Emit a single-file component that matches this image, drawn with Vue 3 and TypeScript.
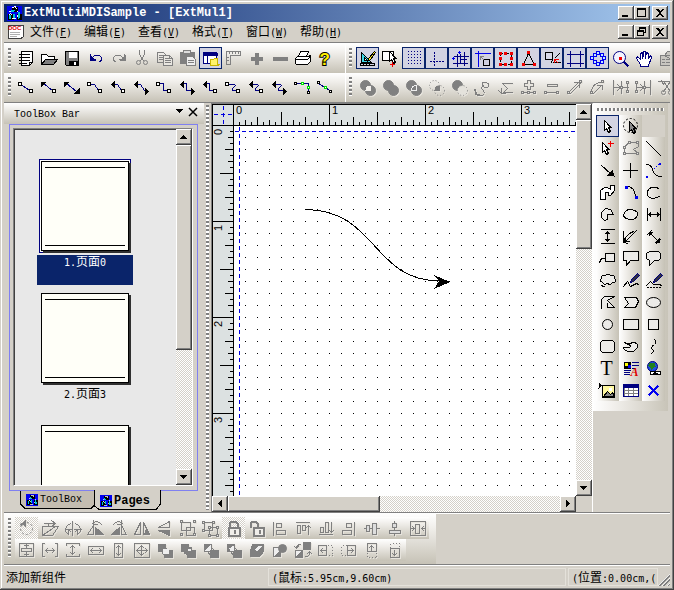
<script setup lang="ts">
import { computed, onBeforeUnmount, onMounted, ref } from 'vue'

interface Tool {
  name: string
  art: string
  on?: boolean
  dither?: boolean
}

const NAVY = '#000080'
const GRAY = '#808080'
const RED = '#f00000'
const BLUE = '#0000f0'

// Icon art is drawn on a 23 x 22 grid where whole numbers are pixel centres.
const p = (d: string, stroke = '#000', fill = 'none', extra = '') =>
  `<path d="${d}" stroke="${stroke}" fill="${fill}" ${extra}/>`
const f = (d: string, fill = '#000') => p(d, 'none', fill)
const g = (d: string, fill = 'none', extra = '') => p(d, GRAY, fill, extra)
const box = (x: number, y: number, s = 3, stroke = '#000', fill = '#fff') =>
  p(`M${x} ${y}h${s}v${s}h${-s}z`, stroke, fill)
const oval = (x: number, y: number, rx: number, ry: number, stroke = '#000', fill = 'none', extra = '') =>
  `<ellipse cx="${x}" cy="${y}" rx="${rx}" ry="${ry}" stroke="${stroke}" fill="${fill}" ${extra}/>`
const cursor = (x: number, y: number, fill = '#fff') =>
  p(`M${x} ${y}v10l2 -2l2 4l2 -1l-2 -4h3z`, '#000', fill) + p(`M${x + 3} ${y + 4}l3 3M${x + 4} ${y + 7}l2 4`)
const dash = 'stroke-dasharray="1 2" stroke-linecap="butt"'

const tool = (name: string, art: string, on = false, dither = false): Tool => ({ name, art, on, dither })

const logo =
  f('M0 0h16v16h-16z', BLUE) +
  f('M5 1h6v5h-6zM1 8h6v6h-6zM10 8h5v6h-5z', '#000') +
  p('M6 2l3 -1l1 3M3 6l4 -1M11 6l2 3M2 10l2 -2l2 2M10 12l2 -3l2 3M5 13h4', '#fff') +
  p('M5 5l3 1M3 9v4M7 8v4M12 7l1 6', '#00c0d8', 'none', 'stroke-width="2"')

const standard: Tool[] = [
  tool('New', p('M6 4h11v11l-3 3h-8z', '#000', '#fff') + p('M4 7h10M4 10h10M4 13h10M4 16h7M14 18v-3h3')),
  tool('Open', p('M3 16v-9h5l2 2h6v3', '#000', '#fff') + p('M3 17l4 -5h12l-4 5z', '#000', GRAY)),
  tool('Save', p('M4 4h13v14h-12l-1 -1z', '#000', GRAY) + f('M7 4h8v6h-8z', '#fff') + f('M7 13h9v5h-9z') + f('M12 14h2v3h-2z', '#fff')),
  tool('Undo', p('M6 7v5h5M7 11l3 -3h5l2 2v3l-2 1', NAVY) + f('M5 7v6h6z', NAVY)),
  tool('Redo', g('M17 7v5h-5M16 11l-3 -3h-5l-2 2v3l2 1') + f('M18 7v6h-6z', GRAY)),
  tool('Cut', g('M9 3v4l4 6M14 3v4l-4 6M9 4v3M14 4v3') + oval(8, 15, 2, 2, GRAY) + oval(15, 15, 2, 2, GRAY)),
  tool('Copy', g('M4 5h6l3 3v7h-9zM6 8h4M6 10h4M6 12h3') + g('M10 8h6l3 3v7h-9z', '#e8e6e0') + g('M12 11h3M12 13h5M12 15h5M16 8v3h3')),
  tool('Paste', g('M4 5h14v11h-14z', GRAY) + g('M7 3h7v3h-7z', '#ddd') + g('M10 9h6l3 3v6h-9z', '#eee') + g('M12 13h5M12 15h5')),
  tool('Panels', p('M4 5h13v11h-13z', NAVY, '#fff') + f('M4 5h14v3h-14z', NAVY) + p('M8 8v8', NAVY) + p('M11 17v-5h3l1 -1h3v6h2l-2 1h-7z', '#c8b400', '#fff36a'), true),
  tool('Rulers', g('M4 4h14v4h-10v9h-4zM7 4v2M10 4v2M13 4v2M16 4v2M4 10h2M4 13h2')),
  tool('Add', f('M9 5h4v4h4v4h-4v4h-4v-4h-4v-4h4z', GRAY)),
  tool('Remove', f('M4 9h15v4h-15z', GRAY)),
  tool('Print', p('M7 9l2 -5h8l-2 5', '#000', '#fff') + p('M4 11l2 -2h11l2 -1v6l-3 3h-11l-1 -1z', '#000', '#fff') + p('M4 12h12M16 12l3 -3')),
  tool('Help', '<text x="5" y="17" font-family="Liberation Sans" font-weight="bold" font-size="17" fill="#fff000" stroke="#000" stroke-width="2" paint-order="stroke">?</text>'),
]

const n = (x: number, y: number) => box(x, y, 2, RED, RED)
const ringBox = (x: number, y: number) => box(x, y, 3, BLUE, '#bfe8ff')
const view: Tool[] = [
  tool('Design mode', p('M5 5v10h10z', '#000', '#40d8e8') + p('M8 10v3h3z', '#000', '#fff') + p('M4 16h14v2h-14zM7 16v1M10 16v1M13 16v1') + p('M18 4l-6 7l-1 3l3 -2l5 -7z', '#000', '#ffe820'), true),
  tool('Copy selection', p('M3 4h11v9h-11z', '#000', '#fff') + cursor(10, 4) + p('M13 15v4M11 17h4', RED)),
  tool('Grid', [4, 7, 10, 13, 16].map((y) => p(`M5 ${y}h14`, NAVY, 'none', 'stroke-width="2" stroke-dasharray="2 1" stroke-linecap="butt"')).join('').replace(/stroke-width="2" stroke-dasharray="2 1"/g, 'stroke-dasharray="1 2"'), true),
  tool('Guides', p('M9 4v14M4 14h15', NAVY, 'none', 'stroke-dasharray="2 1" stroke-linecap="butt"'), true),
  tool('Snap to guides', p('M9 7v12M16 5v13M6 9h14M5 16h14M12 7v8M12 12h6', NAVY) + p('M11 4v2M10 5h2M5 10v2M4 11h2', BLUE), true),
  tool('Snap to grid', p('M4 6h15M7 4v15', BLUE) + box(12, 12, 6, '#000', '#d0d0e0') + g('M9 9h3M9 9v3M9 9l3 3'), true),
  tool('Resize handles', p('M6 6h11v11h-11z', '#000', 'none', 'stroke-dasharray="2 1"') + n(5, 5) + n(10, 5) + n(16, 5) + n(5, 10) + n(16, 10) + n(5, 16) + n(10, 16) + n(16, 16), true),
  tool('Vertices', p('M11 6l-5 11h11z') + n(10, 4) + n(5, 16) + n(16, 16), true),
  tool('Glue', box(5, 5, 7, '#000', '#d8d8e8') + p('M13 15h7M19 6l-4 4M12 12l-1 3') + p('M14 12v3M14 12h4M14 12l3 3', RED), true),
  tool('Page bounds', p('M7 4v15M17 4v15M4 7h16M4 16h16', NAVY), true),
  tool('Ports', ringBox(10, 4) + ringBox(10, 15) + ringBox(4, 9) + ringBox(16, 9) + ringBox(7, 6) + ringBox(14, 6) + ringBox(7, 13) + ringBox(14, 13), true),
  tool('Zoom', oval(10, 10, 6, 6, NAVY, '#f4f4ff') + p('M15 15l3 3', NAVY, 'none', 'stroke-width="2"') + f('M9 9h3v3h-3z', RED)),
  tool('Pan', p('M8 17l-4 -6l1 -2l3 3v-6l2 -1l1 4v-5h2v5l1 -4l2 1v5l2 -3l1 2l-3 8v1h-8z', NAVY, '#fff') + p('M10 8v3M13 8v3M16 9v2', NAVY)),
  tool('Properties', g('M5 8h13v10h-13zM9 8l3 -4h7v5l-3 3z', '#c8c6c0') + g('M7 12h2M11 12h5M7 15h2M11 15h5')),
]

const a1 = box(3, 6)
const a2 = box(14, 13)
const tl = f('M2 5h6l-6 6z')
const lf = f('M3 8l4 -4v8z')
const rt = f('M18 15l-4 -4v8z')
const straight = p('M7 9l7 5', NAVY)
const slant = p('M6 8h4l4 6h2', NAVY)
const ortho = p('M6 7h4v7h5', NAVY)
const curvy = p('M6 8h6l1 1l-3 3v2h5', NAVY)
const gn = (x: number, y: number) => box(x, y, 2, '#00e000')
const connectors: Tool[] = [
  tool('Line', straight + a1 + a2),
  tool('Line, arrow at start', p('M5 7l9 7', NAVY) + tl + a2),
  tool('Line, two arrows', p('M5 7l10 8', NAVY) + tl + f('M18 17v-6l-6 6z')),
  tool('Slanted link', slant + a1 + a2),
  tool('Slanted link, arrow at start', slant + lf + a2),
  tool('Slanted link, two arrows', slant + lf + rt),
  tool('Right angle link', ortho + a1 + a2),
  tool('Right angle link, two arrows', ortho + lf + rt),
  tool('Right angle link, arrow at start', ortho + lf + a2),
  tool('Curved link', curvy + a1 + a2),
  tool('Curved link, arrow at start', curvy + lf + a2),
  tool('Curved link, two arrows', curvy + lf + rt),
  tool('Routed link', p('M4 7h13v8', NAVY) + box(3, 6, 2) + gn(10, 6) + gn(16, 10) + box(16, 15, 2)),
  tool('Free link', p('M4 7l13 8', NAVY) + box(3, 5, 2) + gn(10, 10) + box(15, 14, 2)),
]

const c1 = (fill: string, x = '') => oval(9, 9, 5, 5, GRAY, fill, x)
const c2 = (fill: string, x = '') => oval(14, 14, 5, 5, GRAY, fill, x)
const lens = f('M9 14q0 -5 5 -5q1 5 0 5q-2 1 -5 0', '#f2f0ec')
const gb = (x: number, y: number, s = 2) => box(x, y, s, GRAY, '#e8e6e0')
const shapes: Tool[] = [
  tool('Exclude', c1(GRAY) + c2(GRAY) + lens),
  tool('Union', c1(GRAY) + c2(GRAY) + f('M8 13l5 -5l4 4l-4 4z', GRAY)),
  tool('Divide', c1(GRAY) + c2(GRAY) + p('M9 14q0 -5 5 -5q1 5 0 5q-3 1 -5 0', '#eee', GRAY)),
  tool('Intersect', c1('none', dash) + c2('none', dash) + f('M9 14q0 -5 5 -5q1 5 0 5z', GRAY)),
  tool('Subtract', c1(GRAY) + c2('#e4e2dc', dash)),
  tool('Reverse curve', g('M13 6q5 0 4 4q-3 3 -5 0q-3 -5 1 -4M12 10q-4 1 0 4q2 4 -2 5h-4M4 13v5h4M5 17l-2 -4')),
  tool('Reverse polygon', g('M18 7h-10l5 5l-4 4h9M7 12v5l-3 -3M7 17h4')),
  tool('Add point', g('M10 4h3v3h3v3h-3v3h-3v-3h-3v-3h3zM5 16h13') + gb(4, 15) + gb(10, 15) + gb(16, 15)),
  tool('Delete point', g('M7 8h10v2h-10zM5 16h13') + gb(4, 15) + gb(16, 15)),
  tool('Straighten', g('M5 16l10 -10M7 17l10 -10M11 6h5v5') + gb(4, 15) + gb(16, 4)),
  tool('Round', g('M5 16q0 -9 9 -10M7 17l8 -8M11 9h5v4') + gb(4, 15) + gb(15, 4)),
  tool('Break', g('M4 4v14M4 11h6M8 8l3 3l-3 3M12 5v12M12 11h7M18 6v10') + gb(11, 10) + gb(17, 5) + gb(17, 14)),
  tool('Join', g('M4 6v10M4 11h6M8 8l3 3l-3 3M12 5v12M12 11h5M18 4v14') + gb(3, 5) + gb(3, 14) + gb(11, 10)),
  tool('Trim', g('M3 5h17M8 5l7 10M15 5l-7 10M6 4l2 4M17 4l-2 4') + oval(8, 16, 2, 2, GRAY) + oval(15, 16, 2, 2, GRAY)),
]

const flipTri = g('M10 5v12h-6z') + g('M13 5v12h6z')
const backward = (x1: string, x2: string) => g('M5 5h7v7h-7z', x1) + g('M11 11h8v7h-8z', x2) + g('M8 12l4 5M12 8l4 4')
const arrange1: Tool[] = [
  tool('Rotate', oval(11, 11, 6, 6, GRAY, 'none', 'stroke-dasharray="2 2"') + f('M10 2v7l-4 -3z', GRAY) + oval(6, 7, 1, 1, GRAY, GRAY), false, true),
  tool('Shear', g('M4 9h16l-6 9h-10zM4 18l13 -9M6 6h10M13 3l4 3l-4 3M10 6v3')),
  tool('Free rotate', g('M11 4v14M9 6q-6 3 -5 8l3 3v-5l2 2M14 6q6 3 5 8l-3 3v-5l-2 2M4 12h6M13 12h7')),
  tool('Rotate left', g('M11 10v7h8z', GRAY) + g('M9 8l-6 9h6zM8 6q5 -4 9 1M9 3v4h4')),
  tool('Rotate right', g('M12 10v7h-8z', GRAY) + g('M14 8l5 9h-5zM15 6q-5 -4 -9 1M14 3v4h-4')),
  tool('Flip horizontal', flipTri + g('M16 11l2 6h-4z', GRAY)),
  tool('Flip vertical', g('M5 10l11 -6v6z') + g('M5 13l11 5v-5z', GRAY)),
  tool('Group', g('M5 5h9v8h-9zM10 10h8v8h-8z') + gb(4, 3) + gb(17, 3) + gb(4, 16) + gb(17, 16)),
  tool('Ungroup', g('M5 5h8v8h-8zM10 10h8v8h-8z') + gb(3, 4) + gb(13, 4) + gb(3, 12) + gb(9, 9) + gb(17, 9) + gb(9, 17) + gb(17, 17)),
  tool('Lock', g('M7 10v-4l2 -2h4l2 2v4', 'none', 'stroke-width="2"') + g('M6 10h11v8h-11z', '#f0eeea', 'stroke-width="2"') + f('M11 12h2v4h-2z', GRAY), false, true),
  tool('Unlock', g('M5 9v-3l2 -2h3l2 2v4', 'none', 'stroke-width="2"') + g('M8 10h10v8h-10z', '#f0eeea', 'stroke-width="2"') + f('M13 12h2v4h-2z', GRAY)),
  tool('Align left', g('M5 5v13M8 6h5v4h-5zM8 13h9v4h-9z')),
  tool('Align top', g('M5 5h13M6 8h3v8h-3zM11 8h3v5h-3zM17 8v9M15 10l2 -2l2 2')),
  tool('Align bottom', g('M5 17h13M6 10h3v5h-3zM11 5h3v10h-3zM17 5v10M15 13l2 2l2 -2')),
  tool('Align right', g('M17 5v13M9 6h5v4h-5zM5 13h9v4h-9z')),
  tool('Align middle', g('M4 11h15') + g('M6 8h3v6h-3zM12 6h4v11h-4z', '#ddd')),
  tool('Align centre', g('M11 4v14') + g('M9 6h4v4h-4zM6 13h11v3h-11z', '#ddd')),
  tool('Centre in page', g('M4 4h15v14h-15zM9 7h4v9h-4zM5 11h3M15 11h4M6 9l2 2l-2 2M17 9l-2 2l2 2')),
]
const arrange2: Tool[] = [
  tool('Centre vertically', g('M4 4h14v13h-14zM6 9h10v3h-10zM11 5v3M11 13v3M9 6h4M9 15h4')),
  tool('Space across', g('M4 4v13M19 4v13M4 4h2M4 17h2M17 4h2M17 17h2M7 11h9M9 9l-2 2l2 2M14 9l2 2l-2 2')),
  tool('Space down', g('M5 4h13M5 17h13M5 4v2M18 4v2M5 17v-2M18 17v-2M11 6v9M9 8l2 -2l2 2M9 13l2 2l2 -2')),
  tool('Same width', g('M4 7h15v8h-15zM6 11h11M8 9l-2 2l2 2M15 9l2 2l-2 2')),
  tool('Same height', g('M7 4h8v14h-8zM11 6v10M9 8l2 -2l2 2M9 14l2 2l2 -2')),
  tool('Same size', g('M4 4h15v14h-15zM6 11h11M11 6v10M9 8l2 -2l2 2M9 14l2 2l2 -2M8 9l-2 2l2 2M15 9l2 2l-2 2')),
  tool('To front', backward(GRAY, GRAY) + f('M9 9h6v5h-6z', '#eee')),
  tool('To back', backward(GRAY, GRAY) + g('M8 8h7v6h-7z', GRAY) + f('M11 9h3v2h-3z', '#eee')),
  tool('Forward', backward('#eee', GRAY) + f('M5 5h6l-6 6z', GRAY)),
  tool('Backward', backward(GRAY, GRAY) + f('M7 9l4 -3v5h-4z', '#eee')),
  tool('In front of', g('M7 5h11v7l-4 5h-9v-6z', GRAY) + f('M9 10l4 -4h4l-6 6z', '#eee')),
  tool('Behind', g('M5 8h7v9h-7z', '#eee') + g('M6 17l6 -6v6z', GRAY) + oval(14, 9, 4, 4, GRAY, GRAY)),
  tool('Swap order', g('M12 3h7v7h-7z', GRAY) + g('M4 11h7v7h-7z', '#eee') + g('M4 18l7 -7v7z', GRAY) + g('M9 5q-4 0 -4 4M3 7l2 2l2 -2M14 17q4 0 4 -4M16 14l2 -2l2 2')),
  tool('Nudge left', g('M4 6h8v10h-8zM6 11h5M8 9l-2 2l2 2') + g('M13 6h5v10h-5', 'none', dash)),
  tool('Nudge right', g('M10 6h8v10h-8zM11 11h5M14 9l2 2l-2 2') + g('M9 6h-5v10h5', 'none', dash)),
  tool('Nudge up', g('M7 4h9v8h-9zM11 6v5M9 8l2 -2l2 2') + g('M7 13v5h9v-5', 'none', dash)),
  tool('Nudge down', g('M7 9h9v9h-9zM11 11v5M9 14l2 2l2 -2') + g('M7 8v-4h9v4', 'none', dash)),
]

const soft = '#ecebe8'
const pen = p('M18 4l-6 6l-1 3l3 -1l6 -6z', NAVY, '#303040')
const palette: (Tool | null)[] = [
  tool('Select', cursor(8, 5), true),
  tool('Lasso', oval(11, 10, 7, 7, '#000', 'none', 'stroke-dasharray="2 2"') + cursor(10, 6, '#888')),
  null,
  tool('Add vertex', cursor(6, 5) + p('M14 4v5M12 6h5', RED)),
  tool('Edit vertices', g('M5 16v-7l5 -4h9v4l-5 3l5 4z') + gb(4, 15) + gb(9, 4) + gb(17, 4) + gb(17, 15) + gb(4, 9)),
  tool('Line', p('M4 4l14 14')),
  tool('Arrow line', p('M5 6l9 8') + f('M18 17l-2 -7l-6 6z')),
  tool('Cross', p('M11 4v14M4 11h14')),
  tool('Bezier', p('M4 5q5 0 6 5q2 7 9 7') + p('M5 16l11 -11', BLUE, 'none', dash) + f('M16 3h2v2h-2zM3 16h2v2h-2z', BLUE)),
  tool('Polyline', p('M4 9v9h5v-7h3v3h2l4 -5v-5h-4v4l-3 -2h-3z', '#000', '#fff')),
  tool('Arc', p('M7 5q9 0 9 12', '#000') + f('M5 4h3v3h-3zM15 14h3v3h-3z', BLUE)),
  tool('Open ellipse', p('M16 7q-4 -3 -9 0q-5 5 0 9q5 2 10 -1')),
  tool('Pie', p('M11 11v5l-3 1l-3 -3v-5l4 -4l5 1l3 5h-6', '#000', soft)),
  tool('Closed curve', p('M4 11q3 -6 8 -5q8 2 6 6q-3 5 -8 4q-6 -1 -6 -5', '#000', soft)),
  tool('Horizontal dimension', p('M5 5v12M18 5v12M6 11h11M8 9v4M15 9v4M7 10v2M16 10v2')),
  tool('Vertical dimension', p('M5 4h13M5 18h13M11 6v10M9 8h4M9 14h4M10 7h2M10 15h2')),
  tool('Radius', p('M4 6v8q0 3 4 4M6 16l11 -11M4 17q2 -8 10 -11M6 12v4h4')),
  tool('Aligned dimension', p('M5 9l4 -4M14 18l4 -4M7 7l9 9') + f('M6 6h5l-5 5zM17 17h-5l5 -5z')),
  tool('Connector label', p('M9 6h9v8h-9z', '#000', soft) + p('M9 11h-4l-2 4')),
  tool('Rectangular callout', p('M4 4h15v9h-8l-4 5v-5h-3z', '#000', soft)),
  tool('Rounded callout', p('M7 4h9l2 2v5l-2 2h-4l-5 5v-5l-3 -2v-5z', '#000', soft)),
  tool('Cloud', p('M6 13q-4 -2 -1 -4q-1 -4 4 -3q3 -3 5 0q5 -1 4 3q3 4 -2 4q-2 3 -5 1q-4 2 -5 -1M5 16h1M6 17h2', '#000', soft)),
  tool('Freehand', p('M4 17l4 -5l3 5l6 -3l2 1') + pen),
  tool('Closed freehand', p('M4 16l4 -4l3 3h6l2 1') + p('M4 18h15', '#000', 'none', 'stroke-dasharray="2 1"') + pen),
  tool('Polygon', p('M5 17v-9l3 -3h10l-7 4l7 7h-7v-4', '#000', soft)),
  tool('Closed shape', p('M5 6h12l2 4l-3 6h-11l4 -4z', '#000', soft)),
  tool('Ellipse', oval(11, 11, 7, 5, '#000', soft)),
  tool('Circle', oval(11, 11, 5, 5, '#000', soft)),
  tool('Rectangle', p('M4 6h15v10h-15z', '#000', soft)),
  tool('Square', p('M6 6h10v10h-10z', '#000', soft)),
  tool('Rounded rectangle', p('M6 5h10l2 2v8l-2 2h-10l-2 -2v-8z', '#000', soft)),
  tool('Teardrop', p('M5 7q4 3 8 0q6 0 5 5q-5 7 -12 3q-4 -4 0 -3q5 1 5 -2z', '#000', soft)),
  tool('Curve', p('M12 4q3 2 0 5q-5 3 -1 6q0 2 -2 3')),
  tool('Text', '<text x="4" y="17" font-family="Liberation Serif" font-size="20" fill="#000">T</text>'),
  tool('Rich text', f('M4 4h7v7h-7z', '#000') + f('M5 5h3v3h-3z', '#ff0') + f('M8 7h3v3h-3z', BLUE) + p('M13 5h6M13 8h6M13 11h3M5 13h6M5 15h5M5 17h5', NAVY) + '<text x="11" y="18" font-family="Liberation Serif" font-weight="bold" font-style="italic" font-size="12" fill="#e00000">A</text>'),
  tool('Web link', oval(10, 9, 5, 5, NAVY, '#2050e0') + f('M7 5h5l1 4l-4 3l-3 -4z', '#208020') + p('M8 14h4v3h-4zM13 14h5v3h-5zM11 16h4', '#000', '#fff')),
  tool('Image', p('M6 6h12v12h-12z', '#000', '#fff8a0') + p('M7 17l4 -5l3 3l2 -2l2 4z', '#000', '#888') + f('M12 8h3v3h-3z', '#fff') + f('M2 3l4 3l-4 3z')),
  tool('Table', g('M5 6h14v11h-14zM9 9v7M14 9v7M5 11h13M5 14h13', '#fff') + p('M4 5h15v12h-15z', NAVY) + f('M4 5h15v3h-15z', NAVY)),
  tool('Delete', p('M7 7l8 8M15 7l-8 8', BLUE, 'none', 'stroke-width="2"')),
]

const menus = [
  ['文件', 'F'],
  ['编辑', 'E'],
  ['查看', 'V'],
  ['格式', 'T'],
  ['窗口', 'W'],
  ['帮助', 'H'],
]

const pages = [
  { no: '1.', title: '页面', id: '0', selected: true },
  { no: '2.', title: '页面', id: '3', selected: false },
  { no: '', title: '', id: '', selected: false },
]

const origin = 21
const unit = 96
const ticks = Array.from({ length: 320 }, (_, i) => {
  const k = i + 1
  const size = k % 16 === 0 ? 20 : k % 8 === 0 ? 13 : k % 4 === 0 ? 8 : k % 2 === 0 ? 5 : 3
  return { at: origin + k * 6, size }
})
const hTicks = ticks.map((t) => `M${t.at} ${origin}v${-t.size}`).join('')
const vTicks = ticks.map((t) => `M${origin} ${t.at}h${-t.size}`).join('')

// Ruler numbers are only placed where they fit whole.
const paper = ref<HTMLElement | null>(null)
const size = ref({ w: 364, h: 392 })
const marksUpTo = (length: number) => {
  const count = Math.max(0, Math.floor((length - origin - 16) / unit) + 1)
  return Array.from({ length: count }, (_, i) => ({ label: i, at: origin + i * unit }))
}
const hMarks = computed(() => marksUpTo(size.value.w))
const vMarks = computed(() => marksUpTo(size.value.h))
let observer: ResizeObserver | undefined
onMounted(() => {
  observer = new ResizeObserver(([entry]) => {
    size.value = { w: entry.contentRect.width, h: entry.contentRect.height }
  })
  if (paper.value) observer.observe(paper.value)
})
onBeforeUnmount(() => observer?.disconnect())

const bars = [
  { id: 'top1', groups: [standard, view] },
  { id: 'top2', groups: [connectors, shapes] },
]
</script>

<template>
  <div class="window">
    <header class="title">
      <svg class="logo" viewBox="-0.5 -0.5 16 16" v-html="logo"></svg>
      <h1>ExtMultiMDISample - [ExtMul1]</h1>
      <div class="sys">
        <button aria-label="Minimize"><svg viewBox="0 0 12 10"><path d="M2 7h6v2h-6z" /></svg></button>
        <button aria-label="Maximize"><svg viewBox="0 0 12 10"><path d="M1 0h9v9h-9zM2 2v6h7v-6z" fill-rule="evenodd" /></svg></button>
        <button aria-label="Close" class="close"><svg viewBox="0 0 12 10"><path d="M2 1h2l2 2l2 -2h2l-3 4l3 4h-2l-2 -3l-2 3h-2l3 -4z" /></svg></button>
      </div>
    </header>

    <nav class="menu">
      <svg class="doc" viewBox="0 0 17 16">
        <path d="M1 1h15v12l-3 2l-3 -1l-3 1l-3 -1l-3 1z" fill="#fff" stroke="#404040" />
        <text x="1" y="6">DOC</text>
        <path d="M3 8h10M3 10h10M3 12h7" stroke="#b0b0b0" />
      </svg>
      <button v-for="m in menus" :key="m[1]">{{ m[0] }}<span class="latin">(<u>{{ m[1] }}</u>)</span></button>
      <div class="sys">
        <button aria-label="Minimize document"><svg viewBox="0 0 12 10"><path d="M2 7h6v2h-6z" /></svg></button>
        <button aria-label="Restore document"><svg viewBox="0 0 12 10"><path d="M3 0h7v6h-2v3h-7v-6h2zM4 2v1h4v2h1v-3zM2 5v3h5v-3z" fill-rule="evenodd" /></svg></button>
        <button aria-label="Close document" class="close"><svg viewBox="0 0 12 10"><path d="M2 1h2l2 2l2 -2h2l-3 4l3 4h-2l-2 -3l-2 3h-2l3 -4z" /></svg></button>
      </div>
    </nav>

    <div class="bars">
      <div v-for="bar in bars" :key="bar.id" class="bar-row">
        <div v-for="(group, gi) in bar.groups" :key="gi" class="bar">
          <i class="grip"></i>
          <button v-for="t in group" :key="t.name" class="tool" :class="{ on: t.on }" :aria-label="t.name">
            <svg viewBox="-0.5 -0.5 23 22" v-html="t.art"></svg>
          </button>
        </div>
      </div>
    </div>

    <main class="main">
      <aside class="dock">
        <div class="dock-head">
          <h2>ToolBox Bar</h2>
          <button aria-label="Panel menu"><svg viewBox="0 0 10 10"><path d="M1 2h8l-4 4z" /></svg></button>
          <button aria-label="Close panel"><svg viewBox="0 0 10 10"><path class="thin" d="M1 1l8 8M9 1l-8 8" stroke="#000" /></svg></button>
        </div>
        <div class="dock-frame">
          <div class="well">
            <ul class="pages">
              <li v-for="(pg, pi) in pages" :key="pi" :class="{ selected: pg.selected }">
                <div class="thumb"><div class="sheet"></div></div>
                <div v-if="pg.title" class="caption"><span class="latin">{{ pg.no }}</span>{{ pg.title }}<span class="latin">{{ pg.id }}</span></div>
              </li>
            </ul>
            <div class="scroll vertical">
              <button aria-label="Scroll pages up"><svg viewBox="0 0 8 8"><path d="M0 6h7l-3 -4h-1z" /></svg></button>
              <div class="handle tall"></div>
              <span class="fill"></span>
              <button aria-label="Scroll pages down"><svg viewBox="0 0 8 8"><path d="M0 2h7l-3 4h-1z" /></svg></button>
            </div>
          </div>
        </div>
        <div class="tabs">
          <button class="tab">
            <svg class="tab-shape" viewBox="0 0 76 20"><path d="M0.5 0v13l4 4h67l4 -4v-13" fill="#c4bdb1" stroke="#000" /></svg>
            <svg class="tab-icon" viewBox="-0.5 -0.5 16 16" v-html="logo"></svg><span>ToolBox</span>
          </button>
          <button class="tab active">
            <svg class="tab-shape" viewBox="0 0 68 20"><path d="M0.5 -1v17l4 3h58l4 -5v-15" fill="#d4d0c8" stroke="#000" /></svg>
            <svg class="tab-icon" viewBox="-0.5 -0.5 16 16" v-html="logo"></svg><span>Pages</span>
          </button>
        </div>
      </aside>

      <div class="splitter"><i></i></div>

      <section class="pane">
        <div ref="paper" class="paper">
          <svg class="drawing" shape-rendering="crispEdges">
            <defs>
              <pattern id="dots" :x="origin" :y="origin" width="12" height="12" patternUnits="userSpaceOnUse">
                <rect width="1" height="1" />
              </pattern>
            </defs>
            <rect width="100%" height="100%" fill="#fff" />
            <rect :x="origin + 8" :y="origin + 8" width="100%" height="100%" fill="url(#dots)" />
            <g fill="#dce1e1">
              <rect width="100%" :height="origin" />
              <rect :width="origin" height="100%" />
            </g>
            <g transform="translate(0.5 0.5)" fill="none" stroke="#000" stroke-linecap="square">
              <path d="M0 0H2000M0 0V2000M0 21H2000M21 0V2000" />
              <path :d="hTicks" />
              <path :d="vTicks" />
            </g>
            <g transform="translate(0.5 0.5)" fill="none" stroke="#0000e0" stroke-dasharray="4 3">
              <path d="M22 27H2000" />
              <path d="M27 22V2000" />
              <path d="M11 1V20" />
              <path d="M1 10H20" />
            </g>
            <g class="marks">
              <text v-for="m in hMarks" :key="m.label" :x="m.at + 3" y="10">{{ m.label }}</text>
              <text v-for="m in vMarks" :key="'v' + m.label" :transform="`translate(10 ${m.at + 10}) rotate(-90)`">{{ m.label }}</text>
            </g>
            <path d="M93 105.500C165 105.500 160 177 228 177" fill="none" stroke="#000" />
            <path d="M238 178l-16 -7l5 6l-5 8z" />
          </svg>
        </div>
        <div class="scroll vertical right">
          <button aria-label="Scroll up"><svg viewBox="0 0 8 8"><path d="M0 6h7l-3 -4h-1z" /></svg></button>
          <div class="handle medium"></div>
          <span class="fill"></span>
          <button aria-label="Scroll down"><svg viewBox="0 0 8 8"><path d="M0 2h7l-3 4h-1z" /></svg></button>
        </div>
        <div class="scroll horizontal">
          <button aria-label="Scroll left"><svg viewBox="0 0 8 8"><path d="M6 0v7l-4 -3v-1z" /></svg></button>
          <div class="handle"></div>
          <span class="fill"></span>
          <button aria-label="Scroll right"><svg viewBox="0 0 8 8"><path d="M2 0v7l4 -3v-1z" /></svg></button>
        </div>
      </section>

      <aside class="side">
        <div class="palette">
          <i class="grip wide"></i>
          <div class="palette-grid">
            <template v-for="(t, i) in palette" :key="i">
              <button v-if="t" class="tool" :class="{ on: t.on }" :aria-label="t.name">
                <svg viewBox="-0.5 -0.5 23 22" v-html="t.art"></svg>
              </button>
              <span v-else class="blank"></span>
            </template>
          </div>
        </div>
      </aside>
    </main>

    <div class="bottom">
      <div class="bottom-bar">
        <i class="grip"></i>
        <div>
          <div v-for="(row, ri) in [arrange1, arrange2]" :key="ri" class="arrange">
            <button v-for="t in row" :key="t.name" class="tool" :class="{ dither: t.dither }" :aria-label="t.name">
              <svg viewBox="-0.5 -0.5 23 22" v-html="t.art"></svg>
            </button>
          </div>
        </div>
      </div>
    </div>

    <footer class="status">
      <span class="hint">添加新组件</span>
      <span class="cell mouse"><span class="latin">(</span>鼠标<span class="latin">:5.95cm,9.60cm)</span></span>
      <span class="cell place"><span class="latin">(</span>位置<span class="latin">:0.00cm,(</span></span>
      <svg class="corner" viewBox="0 0 14 14"><path d="M1 14L14 1M6 14L14 6M11 14L14 11" stroke="#808080" stroke-width="2" /><path d="M0 14L14 0M5 14L14 5M10 14L14 10" stroke="#fff" /></svg>
    </footer>
  </div>
</template>

<style>
body {
  background: #d4d0c8;
  overflow: hidden;
}
</style>

<style scoped>
.window {
  box-sizing: border-box;
  display: flex;
  flex-direction: column;
  height: 100vh;
  padding: 4px;
  background: #d4d0c8;
  box-shadow: inset -1px -1px #404040, inset 1px 1px #d4d0c8, inset -2px -2px #808080, inset 2px 2px #fff;
  font: 12px/16px 'Noto Sans CJK SC', sans-serif;
  color: #000;
}
button {
  box-sizing: border-box;
  margin: 0;
  padding: 0;
  border: 0;
  background: none;
  color: inherit;
  font: inherit;
}
svg {
  display: block;
  shape-rendering: crispEdges;
}
h1,
h2 {
  margin: 0;
  white-space: nowrap;
}
.latin {
  font: 10px/16px 'DejaVu Sans Mono', monospace;
}

.title {
  display: flex;
  align-items: center;
  flex: none;
  height: 18px;
  padding: 0 2px;
  background: linear-gradient(90deg, #0a246a, #a6caf0);
}
.logo {
  width: 16px;
  height: 16px;
  margin-right: 2px;
}
.title h1 {
  color: #fff;
  font: bold 12px/18px 'Liberation Mono', monospace;
}
.sys {
  display: flex;
  margin-left: auto;
}
.sys button {
  display: grid;
  place-items: center;
  width: 16px;
  height: 14px;
  background: #d4d0c8;
  box-shadow: inset -1px -1px #404040, inset 1px 1px #fff, inset -2px -2px #808080;
}
.sys .close {
  margin-left: 2px;
}
.sys svg {
  width: 12px;
  height: 10px;
}

.menu {
  display: flex;
  align-items: center;
  flex: none;
  height: 20px;
  padding: 0 2px;
  border-bottom: 1px solid #808080;
}
.doc {
  width: 17px;
  height: 16px;
  margin: 0 6px 0 1px;
}
.doc text {
  fill: #e00000;
  font: bold 6px 'Liberation Sans', sans-serif;
}
.menu > button {
  width: 54px;
  text-align: left;
  white-space: nowrap;
}
.menu .sys {
  width: 50px;
}

.bars {
  flex: none;
  border-top: 1px solid #fff;
  border-bottom: 1px solid #808080;
}
.bar-row {
  display: flex;
  height: 29px;
}
.bar {
  display: flex;
  flex: none;
  box-sizing: border-box;
  padding: 3px 8px 0 4px;
  background: linear-gradient(#fff, #f0eeea 30%, #c6c2b6);
}
.bar:last-child {
  flex: 1 1 0;
  min-width: 0;
  padding-right: 0;
  overflow: hidden;
  box-shadow: inset 1px 0 #fff;
}
.grip {
  flex: none;
  width: 3px;
  height: 20px;
  margin: 1px 4px 0 0;
  background: repeating-linear-gradient(#808080 0 2px, #fff 2px 3px, transparent 3px 4px);
}
.tool {
  flex: none;
  width: 23px;
  height: 22px;
}
.tool svg {
  width: 23px;
  height: 22px;
}
.tool svg :deep(path) {
  stroke-linecap: square;
}
.tool svg :deep(ellipse) {
  shape-rendering: auto;
}
.tool svg :deep([stroke-dasharray]) {
  stroke-linecap: butt;
}
.tool.on {
  background: #d2d3e2;
  box-shadow: inset 0 0 0 1px #0a246a;
}
.tool.dither {
  background: repeating-conic-gradient(#fff 0 25%, #d4d0c8 0 50%) 0 0 / 2px 2px;
}

.main {
  display: flex;
  flex: 1 1 0;
  min-height: 0;
}
.dock {
  display: flex;
  flex: none;
  flex-direction: column;
  width: 200px;
}
.dock-head {
  display: flex;
  align-items: center;
  flex: none;
  box-sizing: border-box;
  height: 21px;
  padding: 0 6px 4px 10px;
  background: linear-gradient(#fff, #c6c2b6);
}
.dock-head h2 {
  flex: 1;
  padding-top: 6px;
  font: 10px/16px 'Liberation Mono', monospace;
}
.dock-head button {
  margin-left: 4px;
}
.dock-head svg {
  width: 10px;
  height: 10px;
}
.thin {
  shape-rendering: auto;
  stroke-width: 1.5;
}
.dock-frame {
  display: flex;
  flex: 1 1 0;
  min-height: 0;
  margin: 0 6px 0 5px;
  padding: 3px 4px 4px 3px;
  border: 1px solid #8080f0;
}
.well {
  display: flex;
  flex: 1;
  min-width: 0;
  border: 1px solid #808080;
  border-right-color: #fff;
  border-bottom-color: #fff;
  box-shadow: inset 1px 1px #404040;
  background: #e8e8e8;
  overflow: hidden;
}
.pages {
  flex: 1;
  margin: 0;
  padding: 30px 0 0 23px;
  list-style: none;
}
.pages li {
  width: 96px;
  height: 132px;
}
.thumb {
  box-sizing: border-box;
  width: 92px;
  height: 94px;
  margin-left: 2px;
  padding: 1px;
  border: 1px solid transparent;
}
.selected .thumb {
  border-color: #000080;
  background: #fff;
}
.sheet {
  box-sizing: border-box;
  width: 88px;
  height: 90px;
  border: 1px solid #000;
  background:
    linear-gradient(#000 0 0) 3px 5px / 80px 1px no-repeat,
    linear-gradient(#000 0 0) 3px 83px / 80px 1px no-repeat,
    #fffff8;
  box-shadow: 2px 2px #303030;
}
.caption {
  height: 30px;
  margin-top: 2px;
  text-align: center;
  line-height: 12px;
}
.caption .latin {
  line-height: 12px;
}
.selected .caption {
  background: #0a246a;
  color: #fff;
}

.scroll {
  display: flex;
  flex: none;
  background: repeating-conic-gradient(#fff 0 25%, #d4d0c8 0 50%) 0 0 / 2px 2px;
}
.vertical {
  flex-direction: column;
  width: 16px;
}
.scroll button,
.handle {
  flex: none;
  background: #d4d0c8;
  box-shadow: inset -1px -1px #404040, inset 1px 1px #fff, inset -2px -2px #808080;
}
.scroll button {
  display: grid;
  place-items: center;
  width: 16px;
  height: 16px;
}
.scroll button svg {
  width: 8px;
  height: 8px;
}
.fill {
  flex: 1;
}
.handle {
  width: 152px;
}
.vertical .handle {
  width: 16px;
  flex: 0 1 auto;
}
.handle.tall {
  height: 205px;
}
.handle.medium {
  height: 129px;
}

.tabs {
  display: flex;
  flex: none;
  height: 21px;
  padding-left: 16px;
}
.tab {
  position: relative;
  display: flex;
  align-items: center;
  width: 74px;
  height: 17px;
  padding-left: 6px;
  font: 10px/16px 'Liberation Mono', monospace;
}
.tab.active {
  width: 68px;
  height: 19px;
  font: bold 12px/16px 'Liberation Mono', monospace;
}
.tab-shape {
  position: absolute;
  inset: 0 auto auto 0;
  width: 76px;
  height: 20px;
}
.active .tab-shape {
  top: -1px;
  width: 68px;
}
.tab-icon {
  position: relative;
  width: 12px;
  height: 12px;
  margin-right: 2px;
}
.tab span {
  position: relative;
}

.splitter {
  display: flex;
  flex: none;
  width: 7px;
  padding: 2px 0;
  box-sizing: border-box;
}
.splitter i {
  width: 3px;
  margin-left: 2px;
  background: repeating-linear-gradient(#808080 0 2px, #fff 2px 4px);
}

.pane {
  display: grid;
  flex: 1 1 0;
  min-width: 0;
  grid-template: minmax(0, 1fr) 16px / minmax(0, 1fr) 16px;
  border: solid #808080;
  border-width: 1px 0 0 1px;
  border-right: 1px solid #fff;
}
.paper {
  overflow: hidden;
}
.drawing {
  width: 100%;
  height: 100%;
}
.marks {
  font: 11px 'Liberation Sans', sans-serif;
}

.side {
  flex: none;
  width: 77px;
}
.palette {
  width: 75px;
  padding: 5px 0 10px;
  background: linear-gradient(90deg, #fff, #f0eeea 30%, #c8c4b8);
}
.grip.wide {
  display: block;
  width: 68px;
  height: 3px;
  margin: 0 0 4px 4px;
  background: repeating-linear-gradient(90deg, #808080 0 2px, #fff 2px 3px, transparent 3px 4px);
}
.palette-grid {
  display: grid;
  grid-template-columns: repeat(3, 23px);
  padding-left: 3px;
}
.palette .tool:not(.on) {
  background: linear-gradient(90deg, #fff, #f0eeea 30%, #c6c2b6);
}
.blank {
  background: #d4d0c8;
}

.bottom {
  flex: none;
  display: flex;
  border-top: 1px solid #808080;
  border-bottom: 1px solid #808080;
  box-shadow: inset 0 1px #fff;
}
.bottom-bar {
  display: flex;
  padding: 4px 7px 3px 4px;
  background: linear-gradient(#fff, #f0eeea 30%, #c6c2b6);
}
.bottom-bar .grip {
  height: 40px;
}
.arrange {
  display: flex;
  width: max-content;
  background: linear-gradient(#fff, #f0eeea 30%, #c6c2b6);
}
.arrange .tool svg,
.bar-row:last-child .bar:last-child .tool svg {
  filter: drop-shadow(1px 1px 0 #e6e3dc);
}

.status {
  display: flex;
  align-items: center;
  flex: none;
  box-sizing: border-box;
  height: 21px;
  padding-top: 2px;
  border-top: 1px solid #fff;
}
.hint {
  flex: 1 1 0;
  padding-left: 2px;
}
.cell {
  flex: none;
  box-sizing: border-box;
  height: 18px;
  padding-left: 3px;
  border: 1px solid #e4e1da;
  white-space: nowrap;
  overflow: hidden;
}
.mouse {
  width: 298px;
}
.place {
  width: 90px;
  margin-left: 2px;
}
.corner {
  flex: none;
  width: 12px;
  height: 12px;
  margin-top: 5px;
}
</style>
